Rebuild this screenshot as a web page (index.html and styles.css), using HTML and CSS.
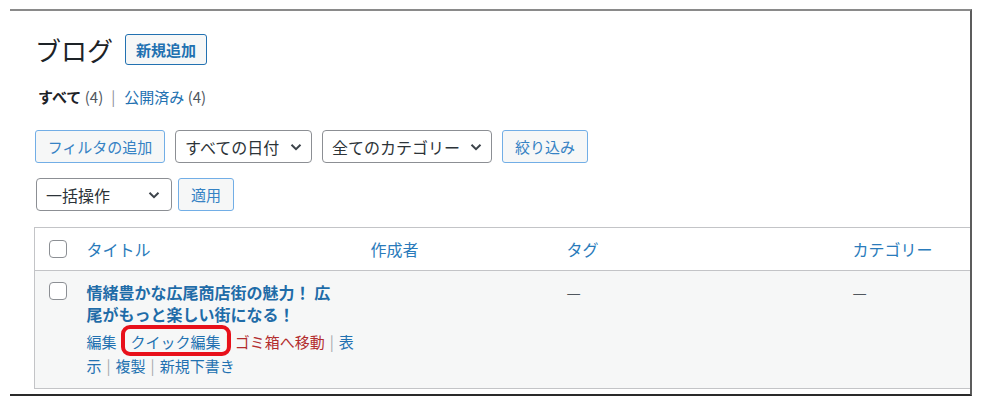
FILE: index.html
```html
<!DOCTYPE html>
<html lang="ja">
<head>
<meta charset="utf-8">
<title>ブログ</title>
<link rel="stylesheet" href="styles.css">
</head>
<body>
<div class="frame">
  <div class="wrap">
    <div class="title-row">
      <h1 class="page-title">ブログ</h1>
      <a class="btn btn-add" href="#">新規追加</a>
    </div>
    <ul class="subsubsub">
      <li><b class="current">すべて</b> <span class="count">(4)</span></li>
      <li class="sep">|</li>
      <li><a href="#">公開済み</a> <span class="count">(4)</span></li>
    </ul>
    <div class="filters">
      <button class="btn btn-soft btn-filter">フィルタの追加</button>
      <div class="select sel-date">すべての日付<svg class="chev" viewBox="0 0 12 8"><path d="M1.5 1.8 6 6.2 10.5 1.8"/></svg></div>
      <div class="select sel-cat">全てのカテゴリー<svg class="chev" viewBox="0 0 12 8"><path d="M1.5 1.8 6 6.2 10.5 1.8"/></svg></div>
      <button class="btn btn-soft btn-narrow">絞り込み</button>
    </div>
    <div class="bulk">
      <div class="select sel-bulk">一括操作<svg class="chev" viewBox="0 0 12 8"><path d="M1.5 1.8 6 6.2 10.5 1.8"/></svg></div>
      <button class="btn btn-soft btn-apply">適用</button>
    </div>
    <table class="posts">
      <colgroup>
        <col class="c-cb"><col class="c-title"><col class="c-author"><col class="c-tags"><col class="c-cats">
      </colgroup>
      <thead>
        <tr>
          <th class="cb"><span class="checkbox"></span></th>
          <th>タイトル</th>
          <th>作成者</th>
          <th>タグ</th>
          <th>カテゴリー</th>
        </tr>
      </thead>
      <tbody>
        <tr>
          <td class="cb"><span class="checkbox"></span></td>
          <td>
            <a class="row-title" href="#">情緒豊かな広尾商店街の魅力！ 広<br>尾がもっと楽しい街になる！</a>
            <div class="row-actions">
              <a href="#">編集</a><span class="pipe">|</span><span class="hl"><a href="#">クイック編集</a></span><span class="pipe">|</span><a class="trash" href="#">ゴミ箱へ移動</a><span class="pipe">|</span><a href="#">表</a><br><a href="#">示</a><span class="pipe">|</span><a href="#">複製</a><span class="pipe">|</span><a href="#">新規下書き</a>
            </div>
          </td>
          <td></td>
          <td class="dash">—</td>
          <td class="dash">—</td>
        </tr>
      </tbody>
    </table>
  </div>
</div>
</body>
</html>
```

FILE: styles.css
```css
* { box-sizing: border-box; }
html, body { margin: 0; padding: 0; background: #fff; }
body {
  font-family: "Noto Sans CJK JP", "Noto Sans", sans-serif;
  color: #2c3338;
}
a { text-decoration: none; color: #2271b1; }

.frame {
  margin: 9px 0 0 10px;
  width: 962px;
  height: 387px;
  border-top: 2px solid #8a8a8a;
  border-right: 2px solid #5c5c5c;
  border-bottom: 2px solid #2a2a2a;
  overflow: hidden;
  background: #fff;
}
.wrap { padding: 23px 0 0 24px; width: 1000px; }

.title-row { display: flex; align-items: center; height: 31px; gap: 12px; }
.page-title {
  margin: 0; font-size: 26px; font-weight: 400; line-height: 31px;
  color: #1d2327; padding-left: 1px;
}
.btn {
  font-family: inherit; display: inline-flex; align-items: center; justify-content: center;
  border: 1px solid #2271b1; background: #f6f7f7; color: #2271b1;
  border-radius: 3px; font-size: 15px; padding: 0;
}
.btn-add { height: 31px; width: 82px; font-weight: 700; }

.subsubsub {
  list-style: none; margin: 21px 0 0 4px; padding: 0; display: flex; align-items: center;
  font-size: 15px; line-height: 22px; height: 22px;
}
.subsubsub .current { color: #1d2327; font-weight: 700; }
.subsubsub .count { color: #50575e; }
.subsubsub .sep { color: #8c8f94; margin: 0 9px 0 8px; }

.filters { display: flex; gap: 10px; margin-top: 22px; height: 33px; padding-left: 1px; }
.bulk { display: flex; gap: 6px; margin-top: 15px; height: 33px; padding-left: 2px; }
.btn-soft { height: 33px; border-color: #72aee6; color: #3582c4; }
.btn-filter { width: 130px; }
.btn-narrow { width: 86px; }
.btn-apply { width: 56px; }

.select {
  height: 33px; border: 1px solid #8c8f94; border-radius: 4px; background: #fff;
  display: flex; align-items: center; justify-content: space-between;
  font-size: 16px; color: #2c3338; padding: 0 9px 0 9px;
}
.sel-date { width: 137px; }
.sel-cat { width: 170px; }
.sel-bulk { width: 136px; padding-right: 11px; }
.chev { width: 12px; height: 8px; fill: none; stroke: #3c434a; stroke-width: 2; }

.posts {
  margin-top: 16px; width: 980px; border-collapse: collapse; table-layout: fixed;
  border: 1px solid #c3c4c7;
}
.c-cb { width: 42px; }
.c-title { width: 284px; }
.c-author { width: 196px; }
.c-tags { width: 286px; }
.c-cats { width: 172px; }
.posts th {
  height: 43px; text-align: left; font-weight: 400; font-size: 16px;
  color: #2a7bbb; padding: 0 10px; border-bottom: 1px solid #c3c4c7;
  vertical-align: middle;
}
.posts th.cb, .posts td.cb { padding: 0 0 0 14px; }
.posts tbody tr { background: #f6f7f7; }
.posts td { vertical-align: top; padding: 10px 10px 10px; font-size: 16px; }
.posts td.cb { padding-top: 11px; }
.checkbox {
  display: block; width: 18px; height: 18px; border: 1px solid #8c8f94;
  border-radius: 4px; background: #fff;
}
.row-title { font-weight: 700; font-size: 16px; line-height: 22px; color: #1f6ca8; display: block; white-space: nowrap; }
.row-actions { margin-top: 5px; font-size: 15px; line-height: 24px; color: #2271b1; white-space: nowrap; }
.row-actions .pipe { color: #a7aaad; margin: 0 5px; }
.row-actions .trash { color: #b32d2e; }
.hl { position: relative; }
.hl::after {
  content: ""; position: absolute; left: -10px; right: -10px; top: -6px; bottom: -4px;
  border: 4px solid #e8101a; border-radius: 9px;
}
.posts td.dash { color: #50575e; line-height: 22px; padding-top: 10px; }
```
